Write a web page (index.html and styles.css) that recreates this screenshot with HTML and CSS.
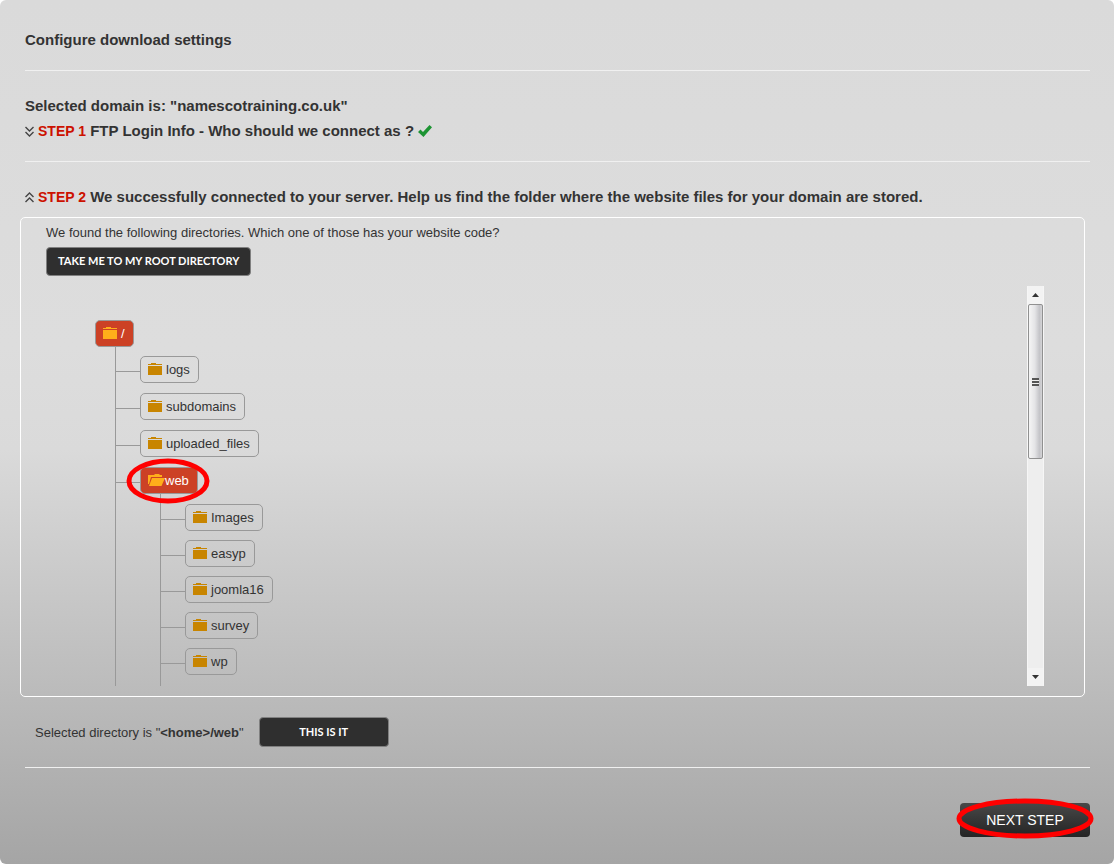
FILE: index.html
```
<!DOCTYPE html>
<html lang="en">

	<head>
		<meta charset="utf-8">
		<title>Configure download settings</title>
		<link rel="stylesheet" href="styles.css">
	</head>

	<body>

		<!-- shared icons -->
		<svg class="sprite" aria-hidden="true">
			<symbol id="folder" viewBox="0 0 14 12">
				<path d="M0 2V1h3V0h5v1h6v1z"/>
				<path d="M0 3h14v9H0z"/>
			</symbol>
			<symbol id="folder-open" viewBox="0 0 17 12">
				<path d="M0 10V1h6l1-1h4l1 1h2v2H3L1 10z"/>
				<path d="M4 4h13l-3.500 8H1z"/>
			</symbol>
		</svg>

		<div class="panel">

			<h1 class="title">Configure download settings</h1>

			<div class="section">
				<h2 class="domain">Selected domain is: "namescotraining.co.uk"</h2>
				<h2 class="step">
					<svg class="chevron" viewBox="0 0 9 11" aria-hidden="true"><path d="M.5 1l4 4 4-4M.5 6l4 4 4-4"/></svg>
					<span><span class="step-number">STEP 1</span> FTP Login Info - Who should we connect as ?</span>
					<svg class="tick" viewBox="0 0 14 12" aria-hidden="true"><path d="M0 7l2.500-2.500L5 7l6.500-7L14 2.200 5.500 12z"/></svg>
				</h2>
			</div>

			<div class="section section-folder">
				<h2 class="step">
					<svg class="chevron" viewBox="0 0 9 11" aria-hidden="true"><path d="M.5 5l4-4 4 4M.5 10l4-4 4 4"/></svg>
					<span><span class="step-number">STEP 2</span> We successfully connected to your server. Help us find the folder where the website files for your domain are stored.</span>
				</h2>

				<div class="directories">
					<p class="question">We found the following directories. Which one of those has your website code?</p>
					<button type="button" class="button">TAKE ME TO MY ROOT DIRECTORY</button>

					<div class="tree-area">
						<div class="tree">
							<a href="#" class="node active"><svg class="folder"><use href="#folder"/></svg>/</a>
							<ul class="branch">
								<li><div class="row"><a href="#" class="node"><svg class="folder"><use href="#folder"/></svg>logs</a></div></li>
								<li><div class="row"><a href="#" class="node"><svg class="folder"><use href="#folder"/></svg>subdomains</a></div></li>
								<li><div class="row"><a href="#" class="node"><svg class="folder"><use href="#folder"/></svg>uploaded_files</a></div></li>
								<li>
									<div class="row">
										<div class="marked">
											<a href="#" class="node active"><svg class="folder open"><use href="#folder-open"/></svg>web</a>
											<svg class="ring ring-web" viewBox="0 0 84 46" aria-hidden="true"><ellipse cx="42" cy="23" rx="39" ry="20"/></svg>
										</div>
									</div>
									<ul class="branch sub">
										<li><div class="row"><a href="#" class="node"><svg class="folder"><use href="#folder"/></svg>Images</a></div></li>
										<li><div class="row"><a href="#" class="node"><svg class="folder"><use href="#folder"/></svg>easyp</a></div></li>
										<li><div class="row"><a href="#" class="node"><svg class="folder"><use href="#folder"/></svg>joomla16</a></div></li>
										<li><div class="row"><a href="#" class="node"><svg class="folder"><use href="#folder"/></svg>survey</a></div></li>
										<li><div class="row"><a href="#" class="node"><svg class="folder"><use href="#folder"/></svg>wp</a></div></li>
									</ul>
								</li>
							</ul>
						</div>

						<div class="scrollbar">
							<button type="button" class="arrow" aria-label="Scroll up"><svg viewBox="0 0 7 4"><path d="M0 4l3.500-4L7 4z"/></svg></button>
							<div class="thumb"><span class="grip"></span></div>
							<button type="button" class="arrow arrow-down" aria-label="Scroll down"><svg viewBox="0 0 7 4"><path d="M0 0h7L3.500 4z"/></svg></button>
						</div>
					</div>
				</div>

				<div class="selected">
					<span>Selected directory is "<b>&lt;home&gt;/web</b>"</span>
					<button type="button" class="button confirm">THIS IS IT</button>
				</div>
			</div>

			<div class="footer">
				<div class="marked">
					<button type="button" class="next">NEXT STEP</button>
					<svg class="ring ring-next" viewBox="0 0 138 41" aria-hidden="true"><ellipse cx="69" cy="20.500" rx="66" ry="17.500"/></svg>
				</div>
			</div>

		</div>

	</body>

</html>
```

FILE: styles.css
```
* {
	box-sizing: border-box;
}

body {
	margin: 0;
	background: white;
	font-family: "Liberation Sans", Arial, sans-serif;
	font-size: 13px;
	color: #333;
}

.sprite {
	display: none;
}

.panel {
	min-height: 100vh;
	padding: 30px 24px 27px 25px;
	border-radius: 6px;
	background: linear-gradient(#dadada 0%, #dddddd 40%, #dadada 52%, #a5a5a5 100%);
}

.title, .domain, .step {
	margin: 0;
	font-size: 15px;
	line-height: 20px;
	font-weight: bold;
}

.section {
	margin-top: 20px;
	padding-top: 25px;
	border-top: 1px solid #f0f0f0;
}

.section-folder {
	padding-bottom: 20px;
	border-bottom: 1px solid #f0f0f0;
}

.step {
	display: flex;
	align-items: center;
	gap: 4px;
}

.domain + .step {
	margin-top: 5px;
}

.step-number {
	color: #cc1100;
	font-size: 14px;
}

.chevron {
	width: 9px;
	height: 11px;
	fill: none;
	stroke: #444;
	stroke-width: 1.4px;
	flex: none;
}

.tick {
	width: 14px;
	height: 12px;
	fill: #1d9433;
}

.directories {
	margin: 10px 5px 0 -5px;
	padding: 5px 40px 10px 25px;
	border: 1px solid white;
	border-radius: 5px;
}

.question {
	margin: 0 0 4px;
	line-height: 20px;
}

.button {
	display: block;
	height: 29px;
	padding: 0 11px 2px;
	border: 1px solid #808080;
	border-radius: 4px;
	background: #2f2f2f;
	color: white;
	font-family: Lato, sans-serif;
	font-size: 11px;
	font-weight: bold;
}

.tree-area {
	display: flex;
	justify-content: space-between;
	height: 400px;
	margin-top: 10px;
}

.tree {
	padding: 34px 0 0 49px;
	overflow: hidden;
}

.branch {
	list-style: none;
	margin: 0 0 0 20px;
	padding: 9px 0 40px;
	border-left: 1px solid #999;
	display: flex;
	flex-direction: column;
	gap: 10px;
}

.branch.sub {
	margin-left: 44px;
	padding-top: 10px;
	gap: 9px;
}

.row {
	display: flex;
}

/* line from the branch to the node */
.row::before {
	content: "";
	width: 24px;
	height: 1px;
	margin-top: 15px;
	background: #999;
}

.node {
	display: inline-flex;
	align-items: center;
	gap: 4px;
	height: 27px;
	padding: 0 8px 1px 7px;
	border: 1px solid #999;
	border-radius: 5px;
	color: #333;
	text-decoration: none;
	vertical-align: top;
}

.node.active {
	background: #cc4125;
	color: white;
}

.folder {
	width: 14px;
	height: 12px;
	fill: #c88500;
}

.folder.open {
	width: 17px;
	margin-right: -4px;
}

.active .folder {
	fill: #ffae1a;
}

.marked {
	position: relative;
}

.ring {
	position: absolute;
	fill: none;
	stroke: #ff0000;
	stroke-width: 5px;
	pointer-events: none;
}

.ring-web {
	width: 84px;
	height: 46px;
	left: -14px;
	top: -9px;
}

.ring-next {
	width: 138px;
	height: 41px;
	left: -4px;
	top: -5px;
}

.scrollbar {
	display: flex;
	flex-direction: column;
	width: 17px;
	border: 1px solid #f6f6f6;
	border-width: 0 1px;
	background: #eee;
}

.arrow {
	display: flex;
	align-items: center;
	justify-content: center;
	height: 18px;
	padding: 0;
	border: 0;
	background: #f3f3f3;
}

.arrow svg {
	width: 7px;
	height: 4px;
	fill: #333;
}

.arrow-down {
	margin-top: auto;
}

.thumb {
	display: flex;
	align-items: center;
	justify-content: center;
	height: 155px;
	border: 1px solid #909090;
	border-radius: 2px;
	background: linear-gradient(90deg, #f5f5f5, #e4e4e6 45%, #c4c4c8 80%, #d4d4d6);
}

.grip {
	width: 7px;
	height: 8px;
	background: repeating-linear-gradient(#555 0px, #555 2px, #eee 2px, #eee 3px);
}

.selected {
	display: flex;
	align-items: center;
	gap: 15px;
	margin: 20px 0 0 10px;
}

.confirm {
	width: 130px;
	height: 30px;
}

.footer {
	display: flex;
	justify-content: flex-end;
	margin-top: 35px;
}

.next {
	display: block;
	width: 130px;
	height: 34px;
	padding: 0;
	border: 0;
	border-radius: 4px;
	background: linear-gradient(#484848, #242424);
	color: white;
	font-family: "Liberation Sans", Arial, sans-serif;
	font-size: 14px;
}
```
